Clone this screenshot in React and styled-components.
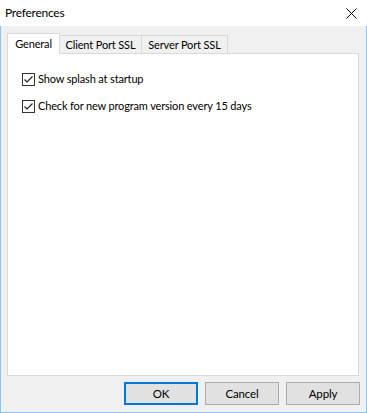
import React from 'react'
import styled, { createGlobalStyle } from 'styled-components'

const GlobalStyle = createGlobalStyle`
  * {
    box-sizing: border-box;
  }
  html,
  body {
    margin: 0;
    padding: 0;
    background: #ffffff;
  }
  body {
    font-family: Lato, 'Liberation Sans', Arial, sans-serif;
    font-size: 11px;
    letter-spacing: -0.15px;
    color: #000000;
  }
`

const Window = styled.div`
  width: 367px;
  height: 413px;
  display: flex;
  flex-direction: column;
  background: #f0f0f0;
`

const TitleBar = styled.div`
  height: 26px;
  flex: none;
  display: flex;
  align-items: center;
  justify-content: space-between;
  padding: 0 10px 0 5px;
  background: #ffffff;
`

const Title = styled.span`
  font-size: 12px;
  letter-spacing: -0.25px;
  line-height: 14px;
`

const CloseButton = styled.button`
  width: 11px;
  height: 11px;
  padding: 0;
  border: 0;
  background: transparent;
  display: flex;
  cursor: pointer;
`

const Body = styled.div`
  flex: 1;
  display: flex;
  flex-direction: column;
  padding: 7px 7px 7px 6px;
  border: 1px solid #8ac4f5;
  border-top: 0;
`

const TabRow = styled.div`
  display: flex;
  align-items: flex-end;
  height: 20px;
  flex: none;
`

const Tab = styled.div`
  position: relative;
  z-index: ${(p) => (p.$active ? 1 : 0)};
  width: ${(p) => p.$width}px;
  height: ${(p) => (p.$active ? 21 : 18)}px;
  margin-bottom: ${(p) => (p.$active ? -1 : 0)}px;
  margin-right: -1px;
  display: flex;
  align-items: center;
  justify-content: center;
  padding-bottom: ${(p) => (p.$active ? 2 : 0)}px;
  background: ${(p) => (p.$active ? '#ffffff' : '#f0f0f0')};
  border: 1px solid #d9d9d9;
  border-bottom: 0;
  white-space: nowrap;
`

const Panel = styled.div`
  height: 323px;
  flex: none;
  background: #ffffff;
  border: 1px solid #d9d9d9;
  padding: 18px 14px;
  display: flex;
  flex-direction: column;
  gap: 13px;
`

const CheckRow = styled.label`
  display: flex;
  align-items: center;
  gap: 3px;
  height: 14px;
  line-height: 14px;
`

const Box = styled.span`
  width: 13px;
  height: 13px;
  flex: none;
  border: 1px solid #333333;
  background: #ffffff;
  display: flex;
  align-items: center;
  justify-content: center;
`

const ButtonRow = styled.div`
  display: flex;
  justify-content: flex-end;
  gap: 7px;
  margin-top: 6px;
  margin-right: -1px;
`

const Button = styled.button`
  width: 74px;
  height: 23px;
  padding: 0;
  font-family: inherit;
  font-size: 11.5px;
  letter-spacing: inherit;
  color: #000000;
  background: #e1e1e1;
  border: ${(p) => (p.$default ? '2px solid #0078d7' : '1px solid #adadad')};
`

function Checkbox({ label }) {
  return (
    <CheckRow>
      <Box>
        <svg width='11' height='11' viewBox='0 0 11 11'>
          <path d='M1.5 5.5 L4 8 L9.5 2.5' fill='none' stroke='#222' strokeWidth='1.2' />
        </svg>
      </Box>
      {label}
    </CheckRow>
  )
}

export default function App() {
  return (
    <>
      <GlobalStyle />
      <Window>
        <TitleBar>
          <Title>Preferences</Title>
          <CloseButton aria-label='Close'>
            <svg width='11' height='11' viewBox='0 0 11 11'>
              <path d='M0.5 0.5 L10.5 10.5 M10.5 0.5 L0.5 10.5' stroke='#000' strokeWidth='1' />
            </svg>
          </CloseButton>
        </TitleBar>
        <Body>
          <TabRow>
            <Tab $active $width={53}>General</Tab>
            <Tab $width={83}>Client Port SSL</Tab>
            <Tab $width={87}>Server Port SSL</Tab>
          </TabRow>
          <Panel>
            <Checkbox label='Show splash at startup' />
            <Checkbox label='Check for new program version every 15 days' />
          </Panel>
          <ButtonRow>
            <Button $default>OK</Button>
            <Button>Cancel</Button>
            <Button>Apply</Button>
          </ButtonRow>
        </Body>
      </Window>
    </>
  )
}
